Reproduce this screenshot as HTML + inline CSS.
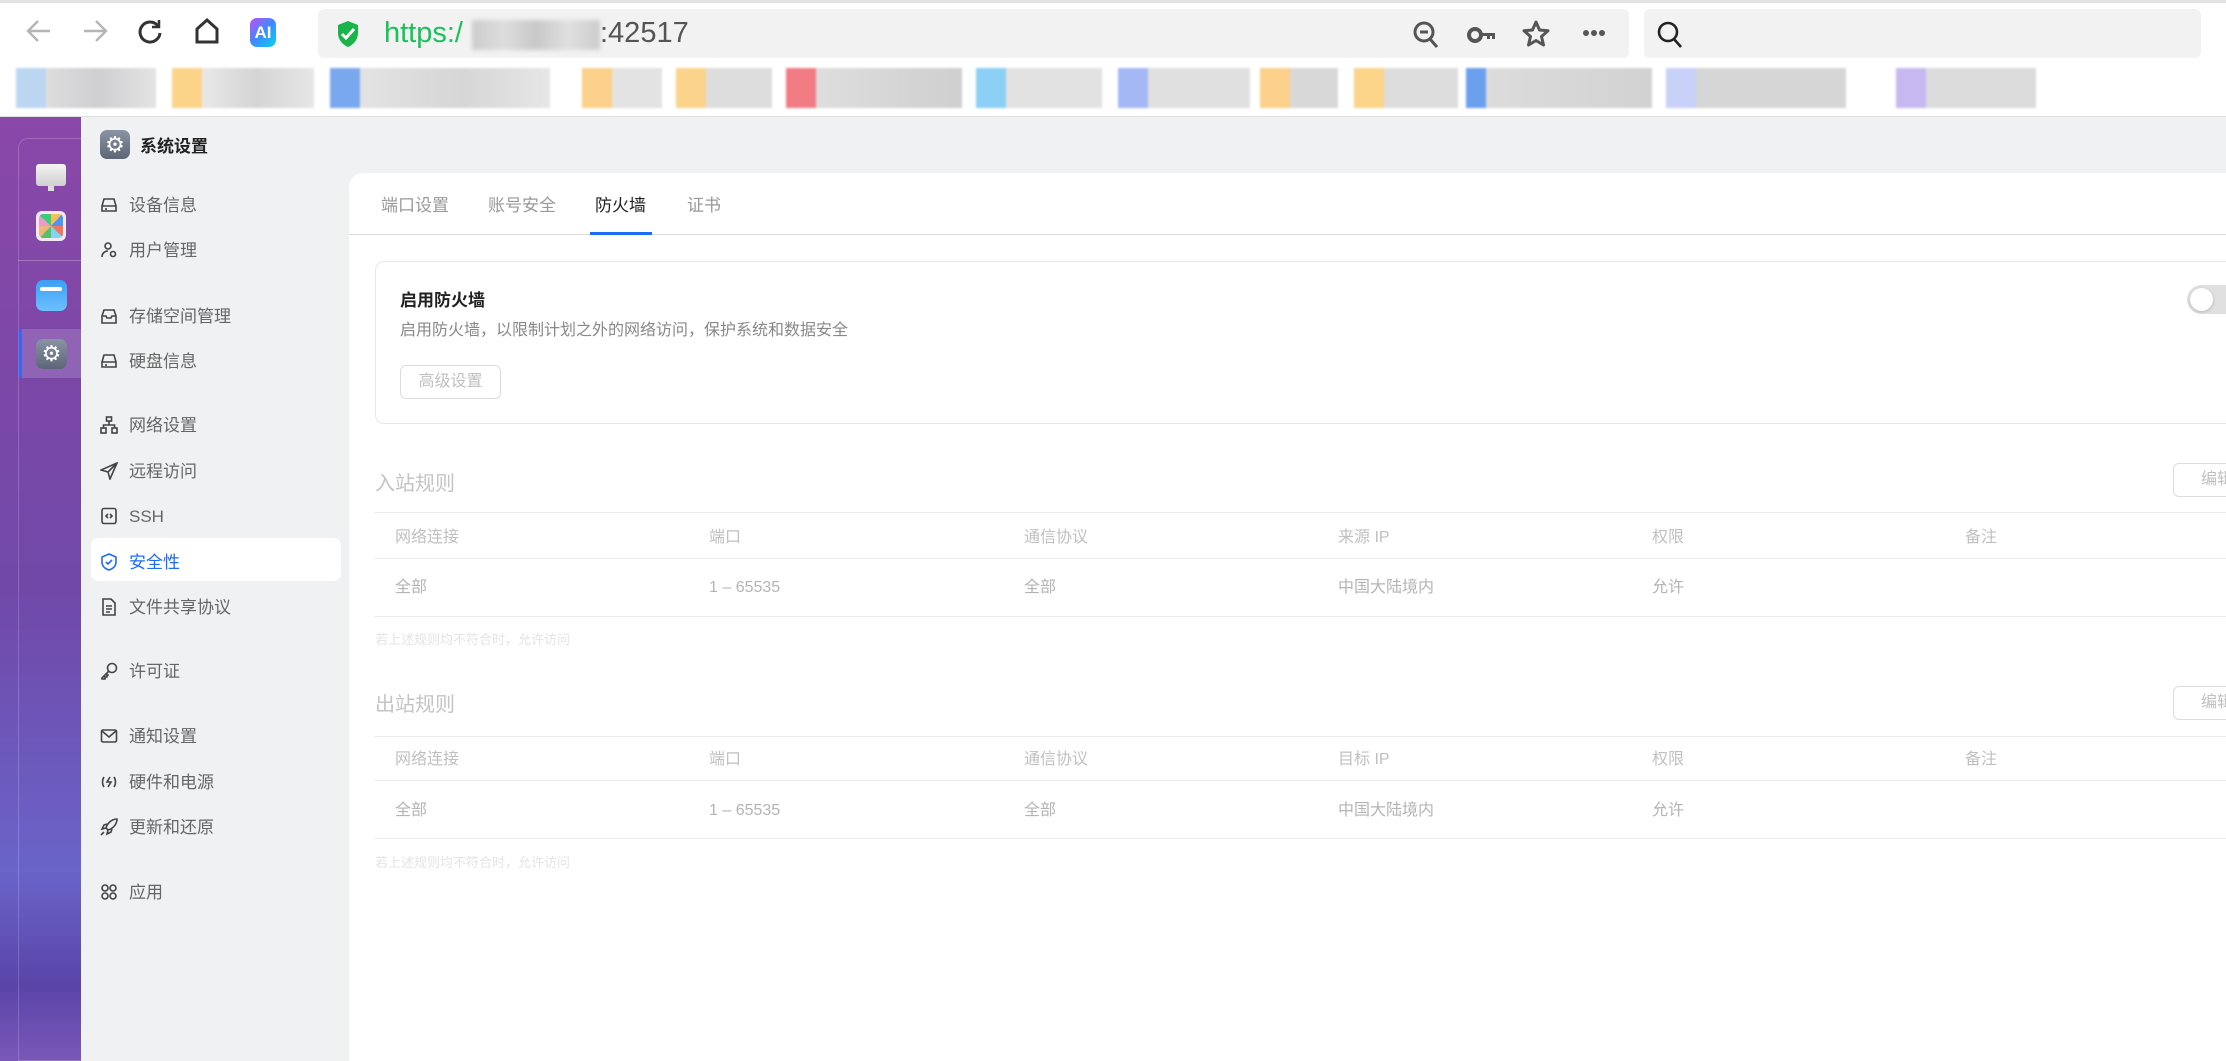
<!DOCTYPE html>
<html><head><meta charset="utf-8"><style>
*{margin:0;padding:0;box-sizing:border-box}
body{width:2226px;height:1061px;overflow:hidden;background:#fff;font-family:"Liberation Sans","Noto Sans CJK SC",sans-serif;position:relative}
.a{position:absolute}
.t{position:absolute;white-space:nowrap;line-height:24px;margin-top:3px}
.side .t{font-size:17px;color:#666;left:129px}
.ic{position:absolute;left:100px;width:18px;height:18px}
.th{font-size:16px;color:#c0c0c0}
.td{font-size:16px;color:#b4b4b4}
.ln{position:absolute;left:375px;right:0;height:1px;background:#ebebeb}
.bm{position:absolute;top:68px;height:40px;filter:blur(1px)}
</style></head><body>
<div class="a" style="left:0;top:0;width:2226px;height:3px;background:#e2e2e2"></div>
<svg class="a" style="left:24px;top:16px" width="30" height="30" viewBox="0 0 30 30" fill="none" stroke="#b5b5b5" stroke-width="2.4"><path d="M26 15H5M14 5L4 15l10 10"/></svg>
<svg class="a" style="left:80px;top:16px" width="30" height="30" viewBox="0 0 30 30" fill="none" stroke="#b5b5b5" stroke-width="2.4"><path d="M4 15h21M16 5l10 10-10 10"/></svg>
<svg class="a" style="left:136px;top:17px" width="28" height="28" viewBox="0 0 28 28" fill="none" stroke="#333" stroke-width="3"><path d="M22 9A10 10 0 1 0 24 16"/><path d="M23 3v7h-7" stroke-width="2.5"/></svg>
<svg class="a" style="left:193px;top:17px" width="28" height="28" viewBox="0 0 28 28" fill="none" stroke="#333" stroke-width="3"><path d="M4 12L14 3l10 9v13H4z"/></svg>
<div class="a" style="left:250px;top:18px;width:26px;height:29px;border-radius:7px;background:linear-gradient(135deg,#c44df0,#3a8cff 50%,#10d0e8);color:#fff;font-size:17px;font-weight:bold;text-align:center;line-height:29px">AI</div>
<div class="a" style="left:318px;top:9px;width:1311px;height:49px;background:#f2f2f2;border-radius:6px"></div>
<svg class="a" style="left:336px;top:20px" width="24" height="28" viewBox="0 0 24 28"><path d="M12 1L2 5v8c0 7 5 12 10 14 5-2 10-7 10-14V5z" fill="#1ab54a"/><path d="M6 14l4 4 8-9" stroke="#fff" stroke-width="3" fill="none"/></svg>
<div class="t" style="left:384px;top:16px;margin-top:0;font-size:29px;line-height:34px;color:#19c25a">https:/</div>
<div class="a" style="left:472px;top:20px;width:128px;height:30px;background:linear-gradient(90deg,#ccc,#ddd,#c8c8c8,#e0e0e0,#ccc);filter:blur(2px)"></div>
<div class="t" style="left:600px;top:16px;margin-top:0;font-size:29px;line-height:34px;color:#555">:42517</div>
<svg class="a" style="left:1412px;top:20px" width="28" height="30" viewBox="0 0 28 30" fill="none" stroke="#555" stroke-width="3"><circle cx="12" cy="12" r="9"/><path d="M18 19l7 8M8 12h8"/></svg>
<svg class="a" style="left:1467px;top:24px" width="30" height="22" viewBox="0 0 30 22"><circle cx="8" cy="11" r="6" fill="none" stroke="#555" stroke-width="4"/><path d="M13 9h15v6h-3v-3h-2v3h-3v-3h-7z" fill="#555"/></svg>
<svg class="a" style="left:1521px;top:19px" width="30" height="30" viewBox="0 0 30 30" fill="none" stroke="#555" stroke-width="3" stroke-linejoin="round"><path d="M15 3l3.5 8 8.5.8-6.5 5.7 2 8.5L15 21.5 7.5 26l2-8.5L3 11.8l8.5-.8z"/></svg>
<svg class="a" style="left:1582px;top:29px" width="24" height="8" viewBox="0 0 24 8" fill="#555"><circle cx="4" cy="4" r="3"/><circle cx="12" cy="4" r="3"/><circle cx="20" cy="4" r="3"/></svg>
<div class="a" style="left:1644px;top:9px;width:557px;height:49px;background:#f2f2f2;border-radius:6px"></div>
<svg class="a" style="left:1656px;top:20px" width="28" height="30" viewBox="0 0 28 30" fill="none" stroke="#222" stroke-width="2.6"><circle cx="12" cy="12" r="9"/><path d="M18 19l7 8"/></svg>
<div class="bm" style="left:16px;width:140px;background:linear-gradient(90deg,#bcd6f2 0 30px,#ddd 30px,#cfcfd2 60%,#e4e4e4)"></div>
<div class="bm" style="left:172px;width:142px;background:linear-gradient(90deg,#fbd48a 0 30px,#e8e8e8 30px,#d5d5d5 60%,#e6e6e6)"></div>
<div class="bm" style="left:330px;width:220px;background:linear-gradient(90deg,#7aa8ee 0 30px,#e3e3e3 30px,#d6d6d6 60%,#e6e6e6)"></div>
<div class="bm" style="left:582px;width:80px;background:linear-gradient(90deg,#fbd08a 0 30px,#e3e3e3 30px)"></div>
<div class="bm" style="left:676px;width:96px;background:linear-gradient(90deg,#fcd38a 0 30px,#ddd 30px)"></div>
<div class="bm" style="left:786px;width:176px;background:linear-gradient(90deg,#f27c84 0 30px,#dedede 30px,#cfcfcf)"></div>
<div class="bm" style="left:976px;width:126px;background:linear-gradient(90deg,#8cd0f5 0 30px,#e2e2e2 30px)"></div>
<div class="bm" style="left:1118px;width:132px;background:linear-gradient(90deg,#a4b8f6 0 30px,#e0e0e0 30px)"></div>
<div class="bm" style="left:1260px;width:78px;background:linear-gradient(90deg,#fbd08a 0 30px,#d8d8d8 30px)"></div>
<div class="bm" style="left:1354px;width:104px;background:linear-gradient(90deg,#fcd48a 0 30px,#ddd 30px)"></div>
<div class="bm" style="left:1466px;width:186px;background:linear-gradient(90deg,#6aa0ee 0 20px,#dcdcdc 20px,#d2d2d2)"></div>
<div class="bm" style="left:1666px;width:180px;background:linear-gradient(90deg,#c8d2f8 0 30px,#d6d6d6 30px)"></div>
<div class="bm" style="left:1896px;width:140px;background:linear-gradient(90deg,#c8b8f2 0 30px,#dcdcdc 30px)"></div>
<div class="a" style="left:0;top:116px;width:2226px;height:1px;background:#e0e0e0"></div>
<div class="a" style="left:0;top:117px;width:81px;height:944px;background:linear-gradient(180deg,#8a48a8 0%,#7048a8 50%,#6a64c8 80%,#5a44a8 92%,#7a58b8 100%)"></div>
<div class="a" style="left:18px;top:138px;width:63px;height:923px;border:1px solid rgba(255,255,255,.18);border-right:none;border-radius:10px 0 0 0"></div>
<div class="a" style="left:18px;top:260px;width:63px;height:1px;background:rgba(255,255,255,.25)"></div>
<div class="a" style="left:36px;top:164px;width:30px;height:22px;border-radius:3px;background:linear-gradient(#f4f4f4,#cfcfcf)"></div>
<div class="a" style="left:48px;top:186px;width:6px;height:5px;background:#ddd"></div>
<div class="a" style="left:36px;top:211px;width:30px;height:30px;border-radius:6px;background:#f2e8f4"></div>
<div class="a" style="left:39px;top:214px;width:24px;height:24px;background:conic-gradient(#f7b84a 0 12%,#3b8cf0 12% 25%,#f06a50 25% 37%,#6fd4f4 37% 50%,#44bb55 50% 62%,#f0b070 62% 75%,#ee90c8 75% 87%,#22cc66 87%);border-radius:4px;opacity:.9"></div>
<div class="a" style="left:36px;top:280px;width:31px;height:31px;border-radius:7px;background:linear-gradient(#3aa0f4,#6cc0ff)"></div>
<div class="a" style="left:40px;top:287px;width:22px;height:4px;background:#fff;border-radius:2px"></div>
<div class="a" style="left:19px;top:329px;width:62px;height:49px;background:rgba(255,255,255,.15)"></div>
<div class="a" style="left:19px;top:329px;width:3px;height:49px;background:#2a6cf6"></div>
<div class="a" style="left:36px;top:339px;width:31px;height:30px;border-radius:7px;background:linear-gradient(#8a94a4,#5c6676);color:#fff;font-size:22px;text-align:center;line-height:30px">⚙</div>
<div class="a" style="left:81px;top:117px;width:2145px;height:944px;background:#f0f1f3"></div>
<div class="side">
<div class="a" style="left:100px;top:130px;width:30px;height:29px;border-radius:7px;background:linear-gradient(#8a94a4,#5c6676);color:#fff;font-size:22px;text-align:center;line-height:29px">⚙</div>
<div class="t" style="left:140px;top:132px;font-size:17px;color:#222;font-weight:bold">系统设置</div>
<div class="a" style="left:91px;top:538px;width:250px;height:43px;background:#fff;border-radius:7px"></div>
<svg class="ic" style="top:196px" viewBox="0 0 18 18" fill="none" stroke="#444" stroke-width="1.6"><path d="M2 10l2-7h10l2 7v5H2z M2 10h14"/><path d="M5 13h2"/></svg>
<div class="t" style="top:191px">设备信息</div>
<svg class="ic" style="top:241px" viewBox="0 0 18 18" fill="none" stroke="#444" stroke-width="1.6"><circle cx="8" cy="5" r="3"/><path d="M2 16c0-4 3-6 6-6"/><circle cx="13" cy="13" r="2.5"/></svg>
<div class="t" style="top:236px">用户管理</div>
<svg class="ic" style="top:307px" viewBox="0 0 18 18" fill="none" stroke="#444" stroke-width="1.6"><path d="M2 9l2-6h10l2 6v7H2z M2 9h4l1 2h4l1-2h4"/></svg>
<div class="t" style="top:302px">存储空间管理</div>
<svg class="ic" style="top:352px" viewBox="0 0 18 18" fill="none" stroke="#444" stroke-width="1.6"><path d="M2 10l2-7h10l2 7v5H2z M2 10h14"/><path d="M5 13h2"/></svg>
<div class="t" style="top:347px">硬盘信息</div>
<svg class="ic" style="top:416px" viewBox="0 0 18 18" fill="none" stroke="#444" stroke-width="1.6"><rect x="6.5" y="1" width="5" height="4"/><rect x="1" y="12" width="5" height="5"/><rect x="12" y="12" width="5" height="5"/><path d="M9 5v4M3.5 12V9h11v3"/></svg>
<div class="t" style="top:411px">网络设置</div>
<svg class="ic" style="top:462px" viewBox="0 0 18 18" fill="none" stroke="#444" stroke-width="1.6"><path d="M17 1L1 8l7 2 2 7z M8 10l9-9"/></svg>
<div class="t" style="top:457px">远程访问</div>
<svg class="ic" style="top:507px" viewBox="0 0 18 18" fill="none" stroke="#444" stroke-width="1.6"><rect x="2" y="1.5" width="14" height="15" rx="2"/><path d="M8 7l-2 2 2 2M10 7l2 2-2 2"/></svg>
<div class="t" style="top:502px">SSH</div>
<svg class="ic" style="top:553px" viewBox="0 0 18 18" fill="none" stroke="#1d6cf5" stroke-width="1.6"><path d="M9 1L2 4v5c0 4 3 7 7 8 4-1 7-4 7-8V4z"/><path d="M6 9l2 2 4-4"/></svg>
<div class="t" style="top:548px;color:#1d6cf5">安全性</div>
<svg class="ic" style="top:598px" viewBox="0 0 18 18" fill="none" stroke="#444" stroke-width="1.6"><path d="M3 1h8l4 4v12H3z"/><path d="M6 8h6M6 11h6M6 14h4"/></svg>
<div class="t" style="top:593px">文件共享协议</div>
<svg class="ic" style="top:662px" viewBox="0 0 18 18" fill="none" stroke="#444" stroke-width="1.6"><circle cx="12" cy="6" r="4.5"/><path d="M9 9l-7 7v1h3v-2h2v-2h2"/></svg>
<div class="t" style="top:657px">许可证</div>
<svg class="ic" style="top:727px" viewBox="0 0 18 18" fill="none" stroke="#444" stroke-width="1.6"><rect x="1.5" y="3" width="15" height="12" rx="1.5"/><path d="M2 4l7 6 7-6"/></svg>
<div class="t" style="top:722px">通知设置</div>
<svg class="ic" style="top:773px" viewBox="0 0 18 18" fill="none" stroke="#444" stroke-width="1.6"><path d="M4 4C2 7 2 11 4 14M14 4c2 3 2 7 0 10M10 4L7 9h4l-3 5"/></svg>
<div class="t" style="top:768px">硬件和电源</div>
<svg class="ic" style="top:818px" viewBox="0 0 18 18" fill="none" stroke="#444" stroke-width="1.6"><path d="M17 1c-6 0-10 5-11 9l2 2c4-1 9-5 9-11z M6 10l-4 1 2-4 3-1 M8 12l-1 4 4-2 1-3"/><path d="M4 14l-3 3"/></svg>
<div class="t" style="top:813px">更新和还原</div>
<svg class="ic" style="top:883px" viewBox="0 0 18 18" fill="none" stroke="#444" stroke-width="1.6"><circle cx="5" cy="5" r="3"/><circle cx="13" cy="5" r="3"/><circle cx="5" cy="13" r="3"/><circle cx="13" cy="13" r="3"/></svg>
<div class="t" style="top:878px">应用</div>
</div>
<div class="a" style="left:349px;top:173px;width:1877px;height:888px;background:#fff;border-radius:14px 0 0 0"></div>
<div class="t" style="left:381px;top:191px;font-size:17px;color:#999">端口设置</div>
<div class="t" style="left:488px;top:191px;font-size:17px;color:#999">账号安全</div>
<div class="t" style="left:595px;top:191px;font-size:17px;color:#222">防火墙</div>
<div class="t" style="left:687px;top:191px;font-size:17px;color:#999">证书</div>
<div class="a" style="left:349px;top:234px;width:1877px;height:1px;background:#dcdcdc"></div>
<div class="a" style="left:590px;top:232px;width:62px;height:3px;background:#1d6cf5"></div>
<div class="a" style="left:375px;top:261px;width:1870px;height:163px;border:1px solid #e6e7ea;border-radius:9px"></div>
<div class="t" style="left:400px;top:286px;font-size:17px;color:#222;font-weight:bold">启用防火墙</div>
<div class="t" style="left:400px;top:316px;font-size:16px;color:#888">启用防火墙，以限制计划之外的网络访问，保护系统和数据安全</div>
<div class="a" style="left:400px;top:365px;width:101px;height:34px;border:1px solid #ddd;border-radius:6px;font-size:16px;color:#c0c0c0;text-align:center;line-height:32px">高级设置</div>
<div class="a" style="left:2187px;top:285px;width:60px;height:29px;border-radius:15px;background:#e0e0e0"></div>
<div class="a" style="left:2190px;top:288px;width:23px;height:23px;border-radius:50%;background:#fff;box-shadow:0 1px 3px rgba(0,0,0,.2)"></div>

<div class="t" style="left:375px;top:468px;font-size:20px;line-height:26px;color:#c4c4c4">入站规则</div>
<div class="a" style="left:2173px;top:463px;width:80px;height:34px;border:1px solid #ddd;border-radius:6px;font-size:16px;color:#c0c0c0;line-height:32px;padding-left:27px">编辑</div>
<div class="ln" style="top:512px"></div>
<div class="ln" style="top:558px"></div>
<div class="ln" style="top:616px"></div>
<div class="t th" style="left:395px;top:523px">网络连接</div><div class="t th" style="left:709px;top:523px">端口</div><div class="t th" style="left:1024px;top:523px">通信协议</div><div class="t th" style="left:1338px;top:523px">来源 IP</div><div class="t th" style="left:1652px;top:523px">权限</div><div class="t th" style="left:1965px;top:523px">备注</div>
<div class="t td" style="left:395px;top:573px">全部</div><div class="t td" style="left:709px;top:573px">1 – 65535</div><div class="t td" style="left:1024px;top:573px">全部</div><div class="t td" style="left:1338px;top:573px">中国大陆境内</div><div class="t td" style="left:1652px;top:573px">允许</div>
<div class="t" style="left:375px;top:625px;font-size:13px;color:#e4e4e4">若上述规则均不符合时，允许访问</div>

<div class="t" style="left:375px;top:689px;font-size:20px;line-height:26px;color:#c4c4c4">出站规则</div>
<div class="a" style="left:2173px;top:686px;width:80px;height:34px;border:1px solid #ddd;border-radius:6px;font-size:16px;color:#c0c0c0;line-height:32px;padding-left:27px">编辑</div>
<div class="ln" style="top:736px"></div>
<div class="ln" style="top:780px"></div>
<div class="ln" style="top:838px"></div>
<div class="t th" style="left:395px;top:745px">网络连接</div><div class="t th" style="left:709px;top:745px">端口</div><div class="t th" style="left:1024px;top:745px">通信协议</div><div class="t th" style="left:1338px;top:745px">目标 IP</div><div class="t th" style="left:1652px;top:745px">权限</div><div class="t th" style="left:1965px;top:745px">备注</div>
<div class="t td" style="left:395px;top:796px">全部</div><div class="t td" style="left:709px;top:796px">1 – 65535</div><div class="t td" style="left:1024px;top:796px">全部</div><div class="t td" style="left:1338px;top:796px">中国大陆境内</div><div class="t td" style="left:1652px;top:796px">允许</div>
<div class="t" style="left:375px;top:848px;font-size:13px;color:#e4e4e4">若上述规则均不符合时，允许访问</div>
</body></html>
